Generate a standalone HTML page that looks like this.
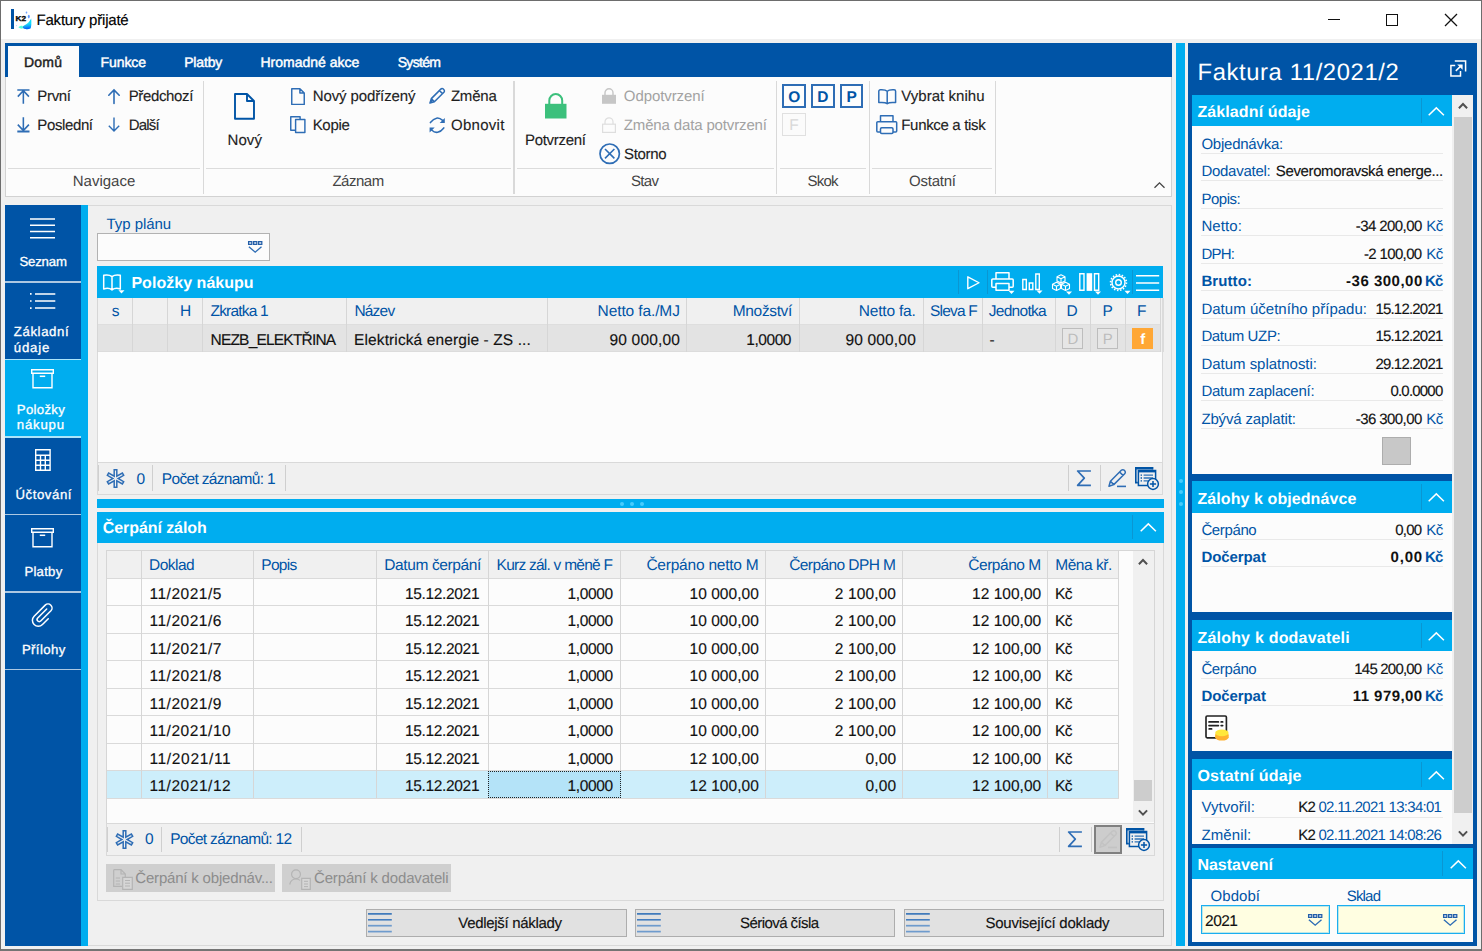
<!DOCTYPE html>
<html lang="cs"><head><meta charset="utf-8"><title>Faktury přijaté</title>
<style>
html,body{margin:0;padding:0}
body{width:1482px;height:951px;position:relative;overflow:hidden;background:#f0f0f0;font-family:"Liberation Sans",sans-serif;font-size:15px;color:#1e1e1e;text-rendering:geometricPrecision}
.a{position:absolute;box-sizing:border-box}
.t{position:absolute;white-space:nowrap;line-height:1}
svg{overflow:visible}
</style></head><body>
<div class="a" style="left:0.00px;top:0.00px;width:1482.00px;height:951.00px;background:#f0f0f0;border:1px solid #6d6d6d;border-bottom:2px solid #747474;"></div>
<div class="a" style="left:1.00px;top:1.00px;width:1480.00px;height:38.00px;background:#ffffff;"></div>
<div class="a" style="left:11.00px;top:9.00px;width:2.50px;height:20.00px;background:#0054a6;"></div>
<svg class="a" style="left:14.00px;top:9.00px;" width="18.00" height="20.00" viewBox="0 0 18 20"><defs><linearGradient id="lg" x1="0.1" y1="0.9" x2="0.95" y2="0.1"><stop offset="0" stop-color="#48ffd6"/><stop offset=".45" stop-color="#22e6f4"/><stop offset="1" stop-color="#00d8ff"/></linearGradient><linearGradient id="lg2" x1="0" y1="0" x2="0" y2="1"><stop offset=".45" stop-color="#0060ff" stop-opacity="0"/><stop offset="1" stop-color="#0058ff"/></linearGradient></defs>
<path d="M17.2 9.6C17.5 14 17.4 17.4 16.6 19.2C14 20.6 10.6 20.4 8.5 18.7C8 17.4 9 17 10.2 16.4C13.2 15 15.6 13 17.2 9.6Z" fill="url(#lg)"/>
<path d="M17.2 9.6C17.5 14 17.4 17.4 16.6 19.2C14 20.6 10.6 20.4 8.5 18.7C8 17.4 9 17 10.2 16.4C13.2 15 15.6 13 17.2 9.6Z" fill="url(#lg2)"/>
<path d="M4.4 18.3C6 17 7.5 16.7 8.6 16.9L8.7 19.6C7 19.8 5.5 19.2 4.4 18.3Z" fill="#50ffda"/>
<ellipse cx="12.5" cy="3.6" rx="0.8" ry="1.1" fill="#5a95ff" opacity=".85"/><ellipse cx="14.8" cy="7.6" rx="1" ry="1.8" fill="#4d8dff" opacity=".9"/><circle cx="2.5" cy="16.6" r="0.6" fill="#8fb8ff" opacity=".6"/>
<text x="1.5" y="12.4" font-family="Liberation Sans, sans-serif" font-weight="bold" font-size="7.2" textLength="10.6" lengthAdjust="spacingAndGlyphs" fill="#0a0a0a" stroke="#0a0a0a" stroke-width="0.35">K2</text></svg>
<span class="t" style="left:36.50px;top:13.00px;font-size:15.00px;color:#000;-webkit-text-stroke:0.14px currentColor;letter-spacing:-0.202px;">Faktury přijaté</span>
<div class="a" style="left:1328.00px;top:19.00px;width:12.00px;height:1.20px;background:#111;"></div>
<div class="a" style="left:1386.00px;top:14.00px;width:12.00px;height:12.00px;border:1.3px solid #111;"></div>
<svg class="a" style="left:1445.00px;top:14.00px;" width="12.00" height="12.00" viewBox="0 0 12 12"><path d="M0 0L12 12M12 0L0 12" stroke="#111" stroke-width="1.3" fill="none"/></svg>
<div class="a" style="left:5.00px;top:43.00px;width:1167.00px;height:34.40px;background:#0054a6;"></div>
<div class="a" style="left:8.00px;top:46.30px;width:70.50px;height:31.70px;background:#fcfcfc;"></div>
<span class="t" style="left:24.00px;top:55.00px;font-size:14.00px;color:#1e1e1e;letter-spacing:0.207px;-webkit-text-stroke:0.45px currentColor;">Domů</span>
<span class="t" style="left:100.60px;top:55.00px;font-size:14.00px;color:#fff;letter-spacing:-0.104px;-webkit-text-stroke:0.45px currentColor;">Funkce</span>
<span class="t" style="left:184.20px;top:55.00px;font-size:14.00px;color:#fff;letter-spacing:-0.164px;-webkit-text-stroke:0.45px currentColor;">Platby</span>
<span class="t" style="left:260.40px;top:55.00px;font-size:14.00px;color:#fff;letter-spacing:0.013px;-webkit-text-stroke:0.45px currentColor;">Hromadné akce</span>
<span class="t" style="left:397.70px;top:55.00px;font-size:14.00px;color:#fff;letter-spacing:-0.678px;-webkit-text-stroke:0.45px currentColor;">Systém</span>
<div class="a" style="left:5.00px;top:77.40px;width:1167.00px;height:119.80px;background:#fcfcfc;border:1px solid #d2d2d2;border-top:none;"></div>
<div class="a" style="left:202.90px;top:81.00px;width:1.20px;height:113.00px;background:#d9d9d9;"></div>
<div class="a" style="left:513.40px;top:81.00px;width:1.20px;height:113.00px;background:#d9d9d9;"></div>
<div class="a" style="left:776.10px;top:81.00px;width:1.20px;height:113.00px;background:#d9d9d9;"></div>
<div class="a" style="left:868.60px;top:81.00px;width:1.20px;height:113.00px;background:#d9d9d9;"></div>
<div class="a" style="left:994.90px;top:81.00px;width:1.20px;height:113.00px;background:#d9d9d9;"></div>
<div class="a" style="left:8.40px;top:167.80px;width:191.60px;height:1.20px;background:#dcdcdc;"></div>
<div class="a" style="left:206.00px;top:167.80px;width:305.00px;height:1.20px;background:#dcdcdc;"></div>
<div class="a" style="left:517.00px;top:167.80px;width:256.50px;height:1.20px;background:#dcdcdc;"></div>
<div class="a" style="left:780.00px;top:167.80px;width:86.00px;height:1.20px;background:#dcdcdc;"></div>
<div class="a" style="left:872.00px;top:167.80px;width:120.00px;height:1.20px;background:#dcdcdc;"></div>
<span class="t" style="left:72.72px;top:174.00px;font-size:15.00px;color:#444;">Navigace</span>
<span class="t" style="left:332.40px;top:174.00px;font-size:15.00px;color:#444;letter-spacing:-0.470px;">Záznam</span>
<span class="t" style="left:631.00px;top:174.00px;font-size:15.00px;color:#444;letter-spacing:-0.667px;">Stav</span>
<span class="t" style="left:807.60px;top:174.00px;font-size:15.00px;color:#444;letter-spacing:-0.800px;">Skok</span>
<span class="t" style="left:909.00px;top:174.00px;font-size:15.00px;color:#444;letter-spacing:-0.229px;">Ostatní</span>
<svg class="a" style="left:1154.30px;top:181.70px;" width="11.00" height="6.00" viewBox="0 0 11 6"><path d="M0.5 5.7L5.5 0.8L10.5 5.7" stroke="#444" stroke-width="1.3" fill="none"/></svg>
<span class="t" style="left:37.30px;top:89.00px;font-size:15.00px;color:#1e1e1e;-webkit-text-stroke:0.14px currentColor;letter-spacing:-0.331px;">První</span>
<span class="t" style="left:37.30px;top:118.00px;font-size:15.00px;color:#1e1e1e;-webkit-text-stroke:0.14px currentColor;letter-spacing:-0.379px;">Poslední</span>
<span class="t" style="left:128.70px;top:89.00px;font-size:15.00px;color:#1e1e1e;-webkit-text-stroke:0.14px currentColor;letter-spacing:-0.359px;">Předchozí</span>
<span class="t" style="left:128.70px;top:118.00px;font-size:15.00px;color:#1e1e1e;-webkit-text-stroke:0.14px currentColor;letter-spacing:-0.800px;">Další</span>
<svg class="a" style="left:16.50px;top:88.50px;" width="13.00" height="15.00" viewBox="0 0 13 15"><path d="M0.3 0.9H12.5M6.35 1V14.8M0.8 7.6L6.35 1.6L11.9 7.6" stroke="#2e6db5" stroke-width="1.55" fill="none"/></svg>
<svg class="a" style="left:16.50px;top:117.00px;" width="13.00" height="16.00" viewBox="0 0 13 16"><path d="M6.35 0.2V13.8M0.8 7.6L6.35 13.6L11.9 7.6" stroke="#2e6db5" stroke-width="1.55" fill="none"/><path d="M0.3 14.5H12.5" stroke="#2e6db5" stroke-width="2"/></svg>
<svg class="a" style="left:108.00px;top:89.00px;" width="12.00" height="15.00" viewBox="0 0 12 15"><path d="M6 1V14.5M0.8 6.2L6 1L11.2 6.2" stroke="#2e6db5" stroke-width="1.6" fill="none" stroke-linecap="round"/></svg>
<svg class="a" style="left:108.00px;top:117.00px;" width="12.00" height="15.00" viewBox="0 0 12 15"><path d="M6 0.5V14M0.8 8.8L6 14L11.2 8.8" stroke="#2e6db5" stroke-width="1.4" fill="none"/></svg>
<svg class="a" style="left:233.70px;top:92.60px;" width="21.20" height="26.80" viewBox="0 0 21.2 26.8"><path d="M1 1H13L20 8V25.8H1Z M13 1V8H20" stroke="#0054a6" stroke-width="1.9" fill="none" stroke-linejoin="round"/></svg>
<span class="t" style="left:227.50px;top:133.00px;font-size:15.00px;color:#1e1e1e;-webkit-text-stroke:0.14px currentColor;letter-spacing:0.100px;">Nový</span>
<svg class="a" style="left:291.00px;top:87.50px;" width="14.00" height="17.20" viewBox="0 0 14 17.2"><path d="M0.75 0.75H8.9L13.25 5.1V16.4H0.75Z M8.9 0.75V5.1H13.25" stroke="#2e6db5" stroke-width="1.45" fill="none" stroke-linejoin="round"/></svg>
<span class="t" style="left:312.70px;top:89.00px;font-size:15.00px;color:#1e1e1e;-webkit-text-stroke:0.14px currentColor;letter-spacing:-0.104px;">Nový podřízený</span>
<svg class="a" style="left:290.30px;top:116.00px;" width="16.50" height="17.60" viewBox="0 0 16.5 17.6"><path d="M10.1 3V0.75H0.75V14.3H4.9M5.6 3.6H14.9V16.5H5.6Z" stroke="#2e6db5" stroke-width="1.45" fill="none" stroke-linejoin="round"/></svg>
<span class="t" style="left:312.70px;top:118.00px;font-size:15.00px;color:#1e1e1e;-webkit-text-stroke:0.14px currentColor;letter-spacing:-0.325px;">Kopie</span>
<svg class="a" style="left:428.60px;top:88.00px;" width="16.00" height="16.00" viewBox="0 0 16 16"><path d="M0.9 15.1L2.3 10.6L11.8 1.1a1.75 1.75 0 0 1 2.5 0l0.6 0.6a1.75 1.75 0 0 1 0 2.5L5.4 13.7Z M2.3 10.6L5.4 13.7 M10.4 2.5L13.5 5.6" stroke="#2e6db5" stroke-width="1.5" fill="none" stroke-linejoin="round"/><path d="M0.9 15.1L1.9 11.9L4.1 14.1Z" fill="#2e6db5"/></svg>
<span class="t" style="left:450.90px;top:89.00px;font-size:15.00px;color:#1e1e1e;-webkit-text-stroke:0.14px currentColor;letter-spacing:-0.206px;">Změna</span>
<svg class="a" style="left:428.80px;top:116.50px;" width="16.40" height="16.40" viewBox="0 0 16.4 16.4"><path d="M1.4 5.6Q7.6 -2.2 13.6 3.4M14.8 10.9Q8.6 18.7 2.6 13" stroke="#2e6db5" stroke-width="1.55" fill="none" stroke-linecap="round"/><path d="M15.8 0.9V6H10.7ZM0.6 15.5V10.4H5.7Z" fill="#2e6db5"/></svg>
<span class="t" style="left:451.00px;top:118.00px;font-size:15.00px;color:#1e1e1e;-webkit-text-stroke:0.14px currentColor;letter-spacing:0.271px;">Obnovit</span>
<svg class="a" style="left:544.50px;top:93.00px;" width="21.50" height="25.50" viewBox="0 0 21.5 25.5"><path d="M4.3 11V7.5a6.45 6.45 0 0 1 12.9 0V11" stroke="#3cc07c" stroke-width="2" fill="none"/><rect x="0" y="10.8" width="21.5" height="14.7" fill="#3cc07c"/></svg>
<span class="t" style="left:525.00px;top:133.00px;font-size:15.00px;color:#1e1e1e;-webkit-text-stroke:0.14px currentColor;letter-spacing:-0.297px;">Potvrzení</span>
<svg class="a" style="left:602.00px;top:88.00px;" width="14.00" height="16.00" viewBox="0 0 14 16"><path d="M3 7V4.8a4 4 0 0 1 8 0V7" stroke="#c6c6c6" stroke-width="1.4" fill="none"/><rect x="0" y="6.8" width="14" height="9" fill="#c6c6c6"/></svg>
<span class="t" style="left:623.80px;top:89.00px;font-size:15.00px;color:#a2a2a2;letter-spacing:-0.077px;">Odpotvrzení</span>
<svg class="a" style="left:602.00px;top:116.50px;" width="14.00" height="16.00" viewBox="0 0 14 16"><path d="M3 7V4.8a4 4 0 0 1 8 0V7" stroke="#dedede" stroke-width="1.2" fill="none"/><rect x="0.6" y="7.2" width="12.8" height="8.2" fill="none" stroke="#dedede" stroke-width="1.2"/></svg>
<span class="t" style="left:623.80px;top:118.00px;font-size:15.00px;color:#a2a2a2;letter-spacing:-0.145px;">Změna data potvrzení</span>
<svg class="a" style="left:598.50px;top:142.50px;" width="21.40" height="21.40" viewBox="0 0 21.4 21.4"><circle cx="10.7" cy="10.7" r="9.7" stroke="#2e6db5" stroke-width="1.7" fill="none"/><path d="M6 6L15.4 15.4M15.4 6L6 15.4" stroke="#2e6db5" stroke-width="1.6"/></svg>
<span class="t" style="left:624.00px;top:147.00px;font-size:15.00px;color:#1e1e1e;-webkit-text-stroke:0.14px currentColor;letter-spacing:-0.315px;">Storno</span>
<div class="a" style="left:782.30px;top:84.20px;width:23.70px;height:23.40px;background:#fdfdfd;border:2px solid #2e6db5;"></div>
<span class="t" style="left:788.15px;top:90.00px;font-size:15.50px;color:#0054a6;font-weight:bold;">O</span>
<div class="a" style="left:811.00px;top:84.20px;width:23.70px;height:23.40px;background:#fdfdfd;border:2px solid #2e6db5;"></div>
<span class="t" style="left:817.32px;top:90.00px;font-size:15.50px;color:#0054a6;font-weight:bold;">D</span>
<div class="a" style="left:839.80px;top:84.20px;width:23.70px;height:23.40px;background:#fdfdfd;border:2px solid #2e6db5;"></div>
<span class="t" style="left:846.55px;top:90.00px;font-size:15.50px;color:#0054a6;font-weight:bold;">P</span>
<div class="a" style="left:782.30px;top:112.90px;width:23.70px;height:23.30px;background:#fbfbfb;border:1px solid #e0e0e0;"></div>
<span class="t" style="left:789.37px;top:118.00px;font-size:15.50px;color:#d8d8d8;">F</span>
<svg class="a" style="left:877.50px;top:88.60px;" width="18.50" height="15.50" viewBox="0 0 18.5 15.5"><path d="M9.2 2.3C8 1.1 6 0.8 3.8 0.8H2.3A1.5 1.5 0 0 0 0.8 2.3V13.4H3.8C6 13.4 8 13.6 9.2 14.7C10.4 13.6 12.4 13.4 14.6 13.4H17.6V2.3A1.5 1.5 0 0 0 16.1 0.8H14.6C12.4 0.8 10.4 1.1 9.2 2.3ZM9.2 2.3V14.9" stroke="#2e6db5" stroke-width="1.5" fill="none" stroke-linejoin="round"/></svg>
<span class="t" style="left:901.30px;top:89.00px;font-size:15.00px;color:#1e1e1e;-webkit-text-stroke:0.14px currentColor;letter-spacing:0.036px;">Vybrat knihu</span>
<svg class="a" style="left:876.00px;top:115.00px;" width="21.50" height="19.20" viewBox="0 0 21.5 19.2"><path d="M4.5 6.8V0.8H17V6.8M4.5 17H1.8a1 1 0 0 1-1-1V7.8a1 1 0 0 1 1-1H19.7a1 1 0 0 1 1 1V16a1 1 0 0 1-1 1H17" stroke="#2e6db5" stroke-width="1.5" fill="none" stroke-linejoin="round"/><rect x="4.5" y="12.8" width="12.5" height="5.6" rx="1.2" stroke="#2e6db5" stroke-width="1.5" fill="none"/></svg>
<span class="t" style="left:901.30px;top:118.00px;font-size:15.00px;color:#1e1e1e;-webkit-text-stroke:0.14px currentColor;letter-spacing:-0.335px;">Funkce a tisk</span>
<div class="a" style="left:5.00px;top:205.20px;width:76.00px;height:740.60px;background:#0054a6;"></div>
<div class="a" style="left:81.00px;top:205.20px;width:7.40px;height:740.60px;background:#00adef;"></div>
<div class="a" style="left:5.00px;top:358.70px;width:76.00px;height:79.10px;background:#00adef;"></div>
<div class="a" style="left:5.00px;top:281.30px;width:76.00px;height:1.60px;background:rgba(255,255,255,.68);"></div>
<div class="a" style="left:5.00px;top:358.70px;width:76.00px;height:1.60px;background:rgba(255,255,255,.68);"></div>
<div class="a" style="left:5.00px;top:436.20px;width:76.00px;height:1.60px;background:rgba(255,255,255,.68);"></div>
<div class="a" style="left:5.00px;top:513.50px;width:76.00px;height:1.60px;background:rgba(255,255,255,.68);"></div>
<div class="a" style="left:5.00px;top:591.10px;width:76.00px;height:1.60px;background:rgba(255,255,255,.68);"></div>
<div class="a" style="left:5.00px;top:668.60px;width:76.00px;height:1.60px;background:rgba(255,255,255,.68);"></div>
<svg class="a" style="left:29.80px;top:217.50px;" width="25.00" height="21.00" viewBox="0 0 25 21"><path d="M0 0.9H25M0 7.15H25M0 13.4H25M0 19.65H25" stroke="#fff" stroke-width="1.5"/></svg>
<span class="t" style="left:19.40px;top:255.00px;font-size:13.20px;color:#fff;letter-spacing:-0.169px;-webkit-text-stroke:0.3px #fff;">Seznam</span>
<svg class="a" style="left:29.50px;top:293.40px;" width="25.50" height="16.00" viewBox="0 0 25.5 16"><path d="M5 0.9H25.3M5 8H25.3M5 15.1H25.3" stroke="#fff" stroke-width="1.5"/><path d="M0 0.9H1.6M0 8H1.6M0 15.1H1.6" stroke="#fff" stroke-width="1.6"/></svg>
<span class="t" style="left:13.80px;top:325.00px;font-size:13.20px;color:#fff;letter-spacing:0.611px;-webkit-text-stroke:0.3px #fff;">Základní</span>
<span class="t" style="left:13.80px;top:341.00px;font-size:13.20px;color:#fff;letter-spacing:0.800px;-webkit-text-stroke:0.3px #fff;">údaje</span>
<svg class="a" style="left:31.00px;top:369.30px;" width="23.00" height="19.50" viewBox="0 0 23 19.5"><path d="M0.7 0.7H22.3V4.3H0.7ZM2 4.3V18.8H21V4.3" stroke="#fff" stroke-width="1.4" fill="none"/><path d="M8.8 7.3H14.2" stroke="#fff" stroke-width="1.5"/></svg>
<span class="t" style="left:16.80px;top:403.00px;font-size:13.20px;color:#fff;letter-spacing:0.300px;-webkit-text-stroke:0.3px #fff;">Položky</span>
<span class="t" style="left:16.80px;top:418.00px;font-size:13.20px;color:#fff;letter-spacing:0.800px;-webkit-text-stroke:0.3px #fff;">nákupu</span>
<svg class="a" style="left:34.50px;top:449.30px;" width="15.80" height="22.00" viewBox="0 0 15.8 22"><path d="M0.7 0.7H15.1V21.3H0.7ZM0.7 6.2H15.1M0.7 11.2H15.1M0.7 16.2H15.1M5.5 6.2V21.3M10.3 6.2V21.3" stroke="#fff" stroke-width="1.4" fill="none"/></svg>
<span class="t" style="left:15.50px;top:488.00px;font-size:13.20px;color:#fff;letter-spacing:0.561px;-webkit-text-stroke:0.3px #fff;">Účtování</span>
<svg class="a" style="left:31.00px;top:528.30px;" width="23.00" height="19.50" viewBox="0 0 23 19.5"><path d="M0.7 0.7H22.3V4.3H0.7ZM2 4.3V18.8H21V4.3" stroke="#fff" stroke-width="1.4" fill="none"/><path d="M8.8 7.3H14.2" stroke="#fff" stroke-width="1.5"/></svg>
<span class="t" style="left:24.40px;top:565.00px;font-size:13.20px;color:#fff;letter-spacing:0.241px;-webkit-text-stroke:0.3px #fff;">Platby</span>
<svg class="a" style="left:32.00px;top:604.00px;" width="21.00" height="23.00" viewBox="0 0 21 23"><path d="M16.26 14.71 L10.47 20.51 A5.90 5.90 0 0 1 2.12 12.16 L13.19 1.10 A4.05 4.05 0 0 1 18.92 6.82 L8.70 17.04 A2.10 2.10 0 0 1 5.73 14.07 L14.71 5.09" stroke="#fff" stroke-width="1.5" fill="none" stroke-linecap="round"/></svg>
<span class="t" style="left:21.90px;top:643.00px;font-size:13.20px;color:#fff;letter-spacing:0.391px;-webkit-text-stroke:0.3px #fff;">Přílohy</span>
<div class="a" style="left:88.40px;top:205.00px;width:1083.60px;height:741.30px;background:#f0f0f0;border:1px solid #d9d9d9;border-left:none;"></div>
<span class="t" style="left:106.60px;top:217.00px;font-size:15.00px;color:#0054a6;letter-spacing:-0.078px;">Typ plánu</span>
<div class="a" style="left:97.30px;top:233.00px;width:172.50px;height:28.20px;background:#fcfcfc;border:1px solid #b2b2b2;"></div>
<svg class="a" style="left:247.80px;top:241.00px;" width="15.00" height="12.50" viewBox="0 0 15 12.5"><path d="M0.6 0.6H3.8V3.4H0.6ZM5.6 0.6H8.8V3.4H5.6ZM10.6 0.6H13.8V3.4H10.6Z" stroke="#245fa9" stroke-width="1.25" fill="#dfe9f5"/><path d="M0.9 5.8L7.2 11.2L13.5 5.8" stroke="#2e6db5" stroke-width="1.4" fill="none"/></svg>
<div class="a" style="left:97.20px;top:266.40px;width:1066.30px;height:31.30px;background:#00adef;"></div>
<svg class="a" style="left:103.20px;top:274.40px;" width="22.00" height="20.00" viewBox="0 0 22 20"><path d="M9 2.6C7 1 3.5 0.8 0.7 1.3V15C3.5 14.1 7 14.3 9 15.9C11 14.3 14.5 14.1 17.3 15V1.3C14.5 0.8 11 1 9 2.6ZM9 2.6V15.9" stroke="#fff" stroke-width="1.5" fill="none" stroke-linejoin="round"/><path d="M15.5 16.3H21.5L18.5 19.5Z" fill="#fff"/></svg>
<span class="t" style="left:131.40px;top:276.00px;font-size:16.00px;color:#fff;font-weight:bold;letter-spacing:0.035px;">Položky nákupu</span>
<div class="a" style="left:957.70px;top:270.00px;width:1.00px;height:24.00px;background:#0a96d2;"></div>
<div class="a" style="left:986.80px;top:270.00px;width:1.00px;height:24.00px;background:#0a96d2;"></div>
<div class="a" style="left:1132.00px;top:270.00px;width:1.00px;height:24.00px;background:#0a96d2;"></div>
<svg class="a" style="left:967.00px;top:275.50px;" width="13.00" height="13.50" viewBox="0 0 13 13.5"><path d="M0.8 0.8V12.7L12 6.75Z" stroke="#fff" stroke-width="1.4" fill="none" stroke-linejoin="round"/></svg>
<svg class="a" style="left:991.00px;top:272.00px;" width="24.00" height="22.00" viewBox="0 0 24 22"><path d="M5 7V0.8H18V7M5 15.2H1.8a1 1 0 0 1-1-1V8a1 1 0 0 1 1-1H21.2a1 1 0 0 1 1 1v6.2a1 1 0 0 1-1 1H18M5 11.4H18V18.2H5Z" stroke="#fff" stroke-width="1.5" fill="none" stroke-linejoin="round"/><path d="M17.5 18.7H23.5L20.5 21.9Z" fill="#fff"/></svg>
<svg class="a" style="left:1022.00px;top:273.00px;" width="21.00" height="21.00" viewBox="0 0 21 21"><path d="M0.8 6.5H4.3V16.5H0.8ZM7.3 10H10.8V16.5H7.3ZM13.8 1H17.3V16.5H13.8Z" stroke="#fff" stroke-width="1.4" fill="none"/><path d="M14.5 17.5H20.5L17.5 20.7Z" fill="#fff"/></svg>
<svg class="a" style="left:1051.00px;top:273.50px;" width="21.00" height="21.00" viewBox="0 0 21 21"><path d="M10 0.8L14 2.8V7L10 9L6 7V2.8ZM6 2.8L10 4.8L14 2.8M10 4.8V9M5.5 8.3L9.5 10.3V14.5L5.5 16.5L1.5 14.5V10.3ZM1.5 10.3L5.5 12.3L9.5 10.3M5.5 12.3V16.5M14.5 8.3L18.5 10.3V14.5L14.5 16.5L10.5 14.5V10.3ZM10.5 10.3L14.5 12.3L18.5 10.3M14.5 12.3V16.5" stroke="#fff" stroke-width="1.1" fill="none" stroke-linejoin="round"/><path d="M15 17.5H21L18 20.7Z" fill="#fff"/></svg>
<svg class="a" style="left:1078.50px;top:272.50px;" width="23.00" height="22.00" viewBox="0 0 23 22"><path d="M0.8 0.8H5V17.2H0.8ZM15.5 0.8H19.7V17.2H15.5Z" stroke="#fff" stroke-width="1.4" fill="none"/><rect x="7.6" y="0.2" width="5.6" height="17.7" fill="#fff"/><path d="M16 18.6H22L19 21.8Z" fill="#fff"/></svg>
<svg class="a" style="left:1108.50px;top:272.60px;" width="22.00" height="22.00" viewBox="0 0 22 22"><circle cx="9.5" cy="9.5" r="6.5" stroke="#fff" stroke-width="1.4" fill="none"/><circle cx="9.5" cy="9.5" r="7.9" stroke="#fff" stroke-width="1.7" fill="none" stroke-dasharray="1.5 1.6"/><circle cx="9.5" cy="9.5" r="2.8" stroke="#fff" stroke-width="1.4" fill="none"/><path d="M15.5 17.8H21.5L18.5 21Z" fill="#fff"/></svg>
<svg class="a" style="left:1136.40px;top:274.50px;" width="23.20" height="16.00" viewBox="0 0 23.2 16"><path d="M0 0.8H23.2M0 8H23.2M0 15.2H23.2" stroke="#fff" stroke-width="1.5"/></svg>
<div class="a" style="left:97.30px;top:297.70px;width:1063.60px;height:26.50px;background:#f0f0f0;"></div>
<div class="a" style="left:97.30px;top:324.20px;width:1063.60px;height:27.40px;background:#e3e3e3;"></div>
<div class="a" style="left:97.30px;top:351.60px;width:1066.20px;height:110.40px;background:#fcfcfc;border-left:1px solid #dadada;border-right:1px solid #dbdbdb;"></div>
<div class="a" style="left:1162.20px;top:297.70px;width:1.40px;height:54.30px;background:#dbdbdb;"></div>
<div class="a" style="left:97.30px;top:323.60px;width:1063.60px;height:1.00px;background:#dedede;"></div>
<div class="a" style="left:97.30px;top:351.10px;width:1063.60px;height:1.00px;background:#dcdcdc;"></div>
<div class="a" style="left:97.30px;top:297.70px;width:1.00px;height:53.90px;background:#d6d6d6;"></div>
<div class="a" style="left:132.10px;top:297.70px;width:1.00px;height:53.90px;background:#d6d6d6;"></div>
<div class="a" style="left:167.20px;top:297.70px;width:1.00px;height:53.90px;background:#d6d6d6;"></div>
<div class="a" style="left:202.20px;top:297.70px;width:1.00px;height:53.90px;background:#d6d6d6;"></div>
<div class="a" style="left:346.20px;top:297.70px;width:1.00px;height:53.90px;background:#d6d6d6;"></div>
<div class="a" style="left:547.20px;top:297.70px;width:1.00px;height:53.90px;background:#d6d6d6;"></div>
<div class="a" style="left:686.20px;top:297.70px;width:1.00px;height:53.90px;background:#d6d6d6;"></div>
<div class="a" style="left:798.90px;top:297.70px;width:1.00px;height:53.90px;background:#d6d6d6;"></div>
<div class="a" style="left:922.70px;top:297.70px;width:1.00px;height:53.90px;background:#d6d6d6;"></div>
<div class="a" style="left:981.50px;top:297.70px;width:1.00px;height:53.90px;background:#d6d6d6;"></div>
<div class="a" style="left:1054.80px;top:297.70px;width:1.00px;height:53.90px;background:#d6d6d6;"></div>
<div class="a" style="left:1089.90px;top:297.70px;width:1.00px;height:53.90px;background:#d6d6d6;"></div>
<div class="a" style="left:1124.90px;top:297.70px;width:1.00px;height:53.90px;background:#d6d6d6;"></div>
<div class="a" style="left:1160.10px;top:297.70px;width:1.00px;height:53.90px;background:#d6d6d6;"></div>
<span class="t" style="left:111.83px;top:304.00px;font-size:15.50px;color:#0054a6;">s</span>
<span class="t" style="left:180.12px;top:304.00px;font-size:15.50px;color:#0054a6;">H</span>
<span class="t" style="left:210.50px;top:304.00px;font-size:15.50px;color:#0054a6;letter-spacing:-0.800px;">Zkratka 1</span>
<span class="t" style="left:354.40px;top:304.00px;font-size:15.50px;color:#0054a6;letter-spacing:-0.800px;">Název</span>
<span class="t" style="left:597.60px;top:304.00px;font-size:15.50px;color:#0054a6;letter-spacing:-0.113px;">Netto fa./MJ</span>
<span class="t" style="left:732.80px;top:304.00px;font-size:15.50px;color:#0054a6;letter-spacing:-0.357px;">Množství</span>
<span class="t" style="left:858.80px;top:304.00px;font-size:15.50px;color:#0054a6;letter-spacing:-0.199px;">Netto fa.</span>
<span class="t" style="left:930.00px;top:304.00px;font-size:15.50px;color:#0054a6;letter-spacing:-0.800px;">Sleva F</span>
<span class="t" style="left:988.80px;top:304.00px;font-size:15.50px;color:#0054a6;letter-spacing:-0.730px;">Jednotka</span>
<span class="t" style="left:1066.42px;top:304.00px;font-size:15.50px;color:#0054a6;">D</span>
<span class="t" style="left:1102.45px;top:304.00px;font-size:15.50px;color:#0054a6;">P</span>
<span class="t" style="left:1136.97px;top:304.00px;font-size:15.50px;color:#0054a6;">F</span>
<span class="t" style="left:210.50px;top:333.00px;font-size:15.50px;color:#111;-webkit-text-stroke:0.14px currentColor;letter-spacing:-0.800px;">NEZB_ELEKTŘINA</span>
<span class="t" style="left:354.10px;top:333.00px;font-size:15.50px;color:#111;-webkit-text-stroke:0.14px currentColor;letter-spacing:0.104px;">Elektrická energie - ZS ...</span>
<span class="t" style="left:609.50px;top:333.00px;font-size:15.50px;color:#111;-webkit-text-stroke:0.14px currentColor;letter-spacing:0.178px;">90 000,00</span>
<span class="t" style="left:746.20px;top:333.00px;font-size:15.50px;color:#111;-webkit-text-stroke:0.14px currentColor;letter-spacing:-0.426px;">1,0000</span>
<span class="t" style="left:845.40px;top:333.00px;font-size:15.50px;color:#111;-webkit-text-stroke:0.14px currentColor;letter-spacing:0.178px;">90 000,00</span>
<span class="t" style="left:989.50px;top:333.00px;font-size:15.50px;color:#111;-webkit-text-stroke:0.14px currentColor;">-</span>
<div class="a" style="left:1062.30px;top:327.70px;width:21.00px;height:20.90px;background:#e6e6e6;border:1px solid #bdbdbd;"></div>
<span class="t" style="left:1067.40px;top:332.00px;font-size:15.00px;color:#bcbcbc;">D</span>
<div class="a" style="left:1097.30px;top:327.70px;width:21.00px;height:20.90px;background:#e6e6e6;border:1px solid #bdbdbd;"></div>
<span class="t" style="left:1102.81px;top:332.00px;font-size:15.00px;color:#bcbcbc;">P</span>
<div class="a" style="left:1132.30px;top:327.70px;width:21.00px;height:21.10px;background:#ffa735;"></div>
<span class="t" style="left:1140.29px;top:332.00px;font-size:15.00px;color:#fff;font-weight:bold;">f</span>
<div class="a" style="left:97.30px;top:461.80px;width:1066.20px;height:32.80px;background:#f0f0f0;border:1px solid #d9d9d9;"></div>
<div class="a" style="left:98.30px;top:465.30px;width:1.00px;height:25.30px;background:#cfcfcf;"></div>
<div class="a" style="left:152.30px;top:465.30px;width:1.00px;height:25.30px;background:#cfcfcf;"></div>
<div class="a" style="left:284.90px;top:465.30px;width:1.00px;height:25.30px;background:#cfcfcf;"></div>
<div class="a" style="left:1067.50px;top:465.30px;width:1.00px;height:25.30px;background:#cfcfcf;"></div>
<div class="a" style="left:1099.90px;top:465.30px;width:1.00px;height:25.30px;background:#cfcfcf;"></div>
<svg class="a" style="left:106.10px;top:468.90px;" width="19.00" height="19.00" viewBox="0 0 19 19"><path d="M1.32 6.28L2.62 4.02L8.20 7.25L8.20 0.80L10.80 0.80L10.80 7.25L16.38 4.02L17.68 6.28L12.10 9.50L17.68 12.72L16.38 14.98L10.80 11.75L10.80 18.20L8.20 18.20L8.20 11.75L2.62 14.98L1.32 12.72L6.90 9.50Z" stroke="#2e6db5" stroke-width="1.5" fill="none" stroke-linejoin="miter"/></svg>
<span class="t" style="left:136.60px;top:472.00px;font-size:15.50px;color:#0054a6;">0</span>
<span class="t" style="left:161.80px;top:472.00px;font-size:15.50px;color:#0054a6;letter-spacing:-0.685px;">Počet záznamů: 1</span>
<svg class="a" style="left:1076.40px;top:470.00px;" width="16.00" height="16.40" viewBox="0 0 16 16.4"><path d="M14.9 1H1.6L8.3 8.2L1.6 15.4H14.9" stroke="#2e6db5" stroke-width="1.7" fill="none" stroke-linejoin="round"/></svg>
<svg class="a" style="left:1107.70px;top:469.30px;" width="18.50" height="18.50" viewBox="0 0 18.5 18.5"><path d="M1 17.3L2.4 12.2L13.3 1.3a2.1 2.1 0 0 1 3 0l0.4 0.4a2.1 2.1 0 0 1 0 3L5.8 15.6Z M2.4 12.2L5.8 15.6 M11.6 3L15 6.4" stroke="#2e6db5" stroke-width="1.5" fill="none" stroke-linejoin="round"/><path d="M9 17.4H18" stroke="#2e6db5" stroke-width="1.6"/></svg>
<svg class="a" style="left:1135.00px;top:467.30px;" width="24.00" height="23.00" viewBox="0 0 24 23"><g stroke="#0054a6" fill="none"><path d="M2.8 15.6H0.8V0.9H17.6V2.6" stroke-width="1.6"/><path d="M0.8 1.6H17.6" stroke-width="1.8"/><path d="M3.4 3.6H20.6V18.4H3.4Z" stroke-width="1.5"/><path d="M3.4 4.4H20.6" stroke-width="2"/><path d="M8.6 8.2H18M8.6 11H18M8.6 13.8H14" stroke-width="1.3" opacity=".8"/><path d="M5.6 8.2H7M5.6 11H7M5.6 13.8H7" stroke-width="1.3"/><circle cx="18" cy="17" r="5.4" fill="#f0f0f0" stroke-width="1.5"/><path d="M14.9 17H21.1M18 13.9V20.1" stroke-width="1.5"/></g></svg>
<div class="a" style="left:97.20px;top:498.90px;width:1066.40px;height:8.70px;background:#00adef;"></div>
<div class="a" style="left:619.90px;top:501.80px;width:4.00px;height:4.00px;background:#48ccfd;border-radius:50%;"></div>
<div class="a" style="left:629.85px;top:501.80px;width:4.00px;height:4.00px;background:#48ccfd;border-radius:50%;"></div>
<div class="a" style="left:639.80px;top:501.80px;width:4.00px;height:4.00px;background:#48ccfd;border-radius:50%;"></div>
<div class="a" style="left:97.20px;top:511.60px;width:1066.40px;height:31.00px;background:#00adef;"></div>
<span class="t" style="left:102.70px;top:521.00px;font-size:16.00px;color:#fff;font-weight:bold;letter-spacing:-0.065px;">Čerpání záloh</span>
<div class="a" style="left:1131.90px;top:515.00px;width:1.00px;height:24.00px;background:#0a96d2;"></div>
<svg class="a" style="left:1139.60px;top:522.60px;" width="16.60" height="9.00" viewBox="0 0 16.6 9"><path d="M0.7 8.3L8.3 0.9L15.9 8.3" stroke="#fff" stroke-width="1.5" fill="none"/></svg>
<div class="a" style="left:97.20px;top:542.60px;width:1066.40px;height:358.00px;background:#f0f0f0;border:1px solid #d9d9d9;border-top:none;"></div>
<div class="a" style="left:106.40px;top:550.30px;width:1048.30px;height:273.30px;background:#fcfcfc;border:1px solid #d6d6d6;"></div>
<div class="a" style="left:107.40px;top:551.30px;width:1011.20px;height:26.70px;background:#f0f0f0;"></div>
<div class="a" style="left:1133.30px;top:551.30px;width:20.40px;height:271.00px;background:#f0f0f0;"></div>
<div class="a" style="left:107.40px;top:770.80px;width:1011.20px;height:27.20px;background:#cdeefb;"></div>
<div class="a" style="left:107.40px;top:577.50px;width:1011.40px;height:1.00px;background:#dadada;"></div>
<div class="a" style="left:107.40px;top:605.00px;width:1011.40px;height:1.00px;background:#dadada;"></div>
<div class="a" style="left:107.40px;top:632.50px;width:1011.40px;height:1.00px;background:#dadada;"></div>
<div class="a" style="left:107.40px;top:660.00px;width:1011.40px;height:1.00px;background:#dadada;"></div>
<div class="a" style="left:107.40px;top:687.50px;width:1011.40px;height:1.00px;background:#dadada;"></div>
<div class="a" style="left:107.40px;top:715.00px;width:1011.40px;height:1.00px;background:#dadada;"></div>
<div class="a" style="left:107.40px;top:742.50px;width:1011.40px;height:1.00px;background:#dadada;"></div>
<div class="a" style="left:107.40px;top:770.00px;width:1011.40px;height:1.00px;background:#dadada;"></div>
<div class="a" style="left:107.40px;top:797.50px;width:1011.40px;height:1.00px;background:#dadada;"></div>
<div class="a" style="left:141.00px;top:551.30px;width:1.00px;height:246.70px;background:#d6d6d6;"></div>
<div class="a" style="left:253.20px;top:551.30px;width:1.00px;height:246.70px;background:#d6d6d6;"></div>
<div class="a" style="left:376.20px;top:551.30px;width:1.00px;height:246.70px;background:#d6d6d6;"></div>
<div class="a" style="left:487.60px;top:551.30px;width:1.00px;height:246.70px;background:#d6d6d6;"></div>
<div class="a" style="left:619.90px;top:551.30px;width:1.00px;height:246.70px;background:#d6d6d6;"></div>
<div class="a" style="left:765.00px;top:551.30px;width:1.00px;height:246.70px;background:#d6d6d6;"></div>
<div class="a" style="left:901.90px;top:551.30px;width:1.00px;height:246.70px;background:#d6d6d6;"></div>
<div class="a" style="left:1047.40px;top:551.30px;width:1.00px;height:246.70px;background:#d6d6d6;"></div>
<div class="a" style="left:1118.30px;top:551.30px;width:1.00px;height:246.70px;background:#d6d6d6;"></div>
<div class="a" style="left:488.10px;top:770.50px;width:132.50px;height:27.80px;background:#b4e3f8;border:1px dotted #222;"></div>
<span class="t" style="left:149.10px;top:558.00px;font-size:15.50px;color:#0054a6;letter-spacing:-0.556px;">Doklad</span>
<span class="t" style="left:261.30px;top:558.00px;font-size:15.50px;color:#0054a6;letter-spacing:-0.713px;">Popis</span>
<span class="t" style="left:384.20px;top:558.00px;font-size:15.50px;color:#0054a6;letter-spacing:-0.373px;">Datum čerpání</span>
<span class="t" style="left:496.60px;top:558.00px;font-size:15.50px;color:#0054a6;letter-spacing:-0.758px;">Kurz zál. v měně F</span>
<span class="t" style="left:646.40px;top:558.00px;font-size:15.50px;color:#0054a6;letter-spacing:-0.220px;">Čerpáno netto M</span>
<span class="t" style="left:789.20px;top:558.00px;font-size:15.50px;color:#0054a6;letter-spacing:-0.574px;">Čerpáno DPH M</span>
<span class="t" style="left:968.30px;top:558.00px;font-size:15.50px;color:#0054a6;letter-spacing:-0.468px;">Čerpáno M</span>
<span class="t" style="left:1055.20px;top:558.00px;font-size:15.50px;color:#0054a6;letter-spacing:-0.471px;">Měna kř.</span>
<span class="t" style="left:149.40px;top:587.00px;font-size:15.50px;color:#111;-webkit-text-stroke:0.14px currentColor;letter-spacing:0.536px;">11/2021/5</span>
<span class="t" style="left:405.00px;top:587.00px;font-size:15.50px;color:#111;-webkit-text-stroke:0.14px currentColor;letter-spacing:-0.342px;">15.12.2021</span>
<span class="t" style="left:567.60px;top:587.00px;font-size:15.50px;color:#111;-webkit-text-stroke:0.14px currentColor;letter-spacing:-0.386px;">1,0000</span>
<span class="t" style="left:689.60px;top:587.00px;font-size:15.50px;color:#111;-webkit-text-stroke:0.14px currentColor;letter-spacing:0.028px;">10 000,00</span>
<span class="t" style="left:834.70px;top:587.00px;font-size:15.50px;color:#111;-webkit-text-stroke:0.14px currentColor;letter-spacing:0.132px;">2 100,00</span>
<span class="t" style="left:972.00px;top:587.00px;font-size:15.50px;color:#111;-webkit-text-stroke:0.14px currentColor;letter-spacing:0.028px;">12 100,00</span>
<span class="t" style="left:1055.10px;top:587.00px;font-size:15.50px;color:#111;-webkit-text-stroke:0.14px currentColor;letter-spacing:-0.800px;">Kč</span>
<span class="t" style="left:149.40px;top:614.00px;font-size:15.50px;color:#111;-webkit-text-stroke:0.14px currentColor;letter-spacing:0.536px;">11/2021/6</span>
<span class="t" style="left:405.00px;top:614.00px;font-size:15.50px;color:#111;-webkit-text-stroke:0.14px currentColor;letter-spacing:-0.342px;">15.12.2021</span>
<span class="t" style="left:567.60px;top:614.00px;font-size:15.50px;color:#111;-webkit-text-stroke:0.14px currentColor;letter-spacing:-0.386px;">1,0000</span>
<span class="t" style="left:689.60px;top:614.00px;font-size:15.50px;color:#111;-webkit-text-stroke:0.14px currentColor;letter-spacing:0.028px;">10 000,00</span>
<span class="t" style="left:834.70px;top:614.00px;font-size:15.50px;color:#111;-webkit-text-stroke:0.14px currentColor;letter-spacing:0.132px;">2 100,00</span>
<span class="t" style="left:972.00px;top:614.00px;font-size:15.50px;color:#111;-webkit-text-stroke:0.14px currentColor;letter-spacing:0.028px;">12 100,00</span>
<span class="t" style="left:1055.10px;top:614.00px;font-size:15.50px;color:#111;-webkit-text-stroke:0.14px currentColor;letter-spacing:-0.800px;">Kč</span>
<span class="t" style="left:149.40px;top:642.00px;font-size:15.50px;color:#111;-webkit-text-stroke:0.14px currentColor;letter-spacing:0.536px;">11/2021/7</span>
<span class="t" style="left:405.00px;top:642.00px;font-size:15.50px;color:#111;-webkit-text-stroke:0.14px currentColor;letter-spacing:-0.342px;">15.12.2021</span>
<span class="t" style="left:567.60px;top:642.00px;font-size:15.50px;color:#111;-webkit-text-stroke:0.14px currentColor;letter-spacing:-0.386px;">1,0000</span>
<span class="t" style="left:689.60px;top:642.00px;font-size:15.50px;color:#111;-webkit-text-stroke:0.14px currentColor;letter-spacing:0.028px;">10 000,00</span>
<span class="t" style="left:834.70px;top:642.00px;font-size:15.50px;color:#111;-webkit-text-stroke:0.14px currentColor;letter-spacing:0.132px;">2 100,00</span>
<span class="t" style="left:972.00px;top:642.00px;font-size:15.50px;color:#111;-webkit-text-stroke:0.14px currentColor;letter-spacing:0.028px;">12 100,00</span>
<span class="t" style="left:1055.10px;top:642.00px;font-size:15.50px;color:#111;-webkit-text-stroke:0.14px currentColor;letter-spacing:-0.800px;">Kč</span>
<span class="t" style="left:149.40px;top:669.00px;font-size:15.50px;color:#111;-webkit-text-stroke:0.14px currentColor;letter-spacing:0.536px;">11/2021/8</span>
<span class="t" style="left:405.00px;top:669.00px;font-size:15.50px;color:#111;-webkit-text-stroke:0.14px currentColor;letter-spacing:-0.342px;">15.12.2021</span>
<span class="t" style="left:567.60px;top:669.00px;font-size:15.50px;color:#111;-webkit-text-stroke:0.14px currentColor;letter-spacing:-0.386px;">1,0000</span>
<span class="t" style="left:689.60px;top:669.00px;font-size:15.50px;color:#111;-webkit-text-stroke:0.14px currentColor;letter-spacing:0.028px;">10 000,00</span>
<span class="t" style="left:834.70px;top:669.00px;font-size:15.50px;color:#111;-webkit-text-stroke:0.14px currentColor;letter-spacing:0.132px;">2 100,00</span>
<span class="t" style="left:972.00px;top:669.00px;font-size:15.50px;color:#111;-webkit-text-stroke:0.14px currentColor;letter-spacing:0.028px;">12 100,00</span>
<span class="t" style="left:1055.10px;top:669.00px;font-size:15.50px;color:#111;-webkit-text-stroke:0.14px currentColor;letter-spacing:-0.800px;">Kč</span>
<span class="t" style="left:149.40px;top:697.00px;font-size:15.50px;color:#111;-webkit-text-stroke:0.14px currentColor;letter-spacing:0.536px;">11/2021/9</span>
<span class="t" style="left:405.00px;top:697.00px;font-size:15.50px;color:#111;-webkit-text-stroke:0.14px currentColor;letter-spacing:-0.342px;">15.12.2021</span>
<span class="t" style="left:567.60px;top:697.00px;font-size:15.50px;color:#111;-webkit-text-stroke:0.14px currentColor;letter-spacing:-0.386px;">1,0000</span>
<span class="t" style="left:689.60px;top:697.00px;font-size:15.50px;color:#111;-webkit-text-stroke:0.14px currentColor;letter-spacing:0.028px;">10 000,00</span>
<span class="t" style="left:834.70px;top:697.00px;font-size:15.50px;color:#111;-webkit-text-stroke:0.14px currentColor;letter-spacing:0.132px;">2 100,00</span>
<span class="t" style="left:972.00px;top:697.00px;font-size:15.50px;color:#111;-webkit-text-stroke:0.14px currentColor;letter-spacing:0.028px;">12 100,00</span>
<span class="t" style="left:1055.10px;top:697.00px;font-size:15.50px;color:#111;-webkit-text-stroke:0.14px currentColor;letter-spacing:-0.800px;">Kč</span>
<span class="t" style="left:149.40px;top:724.00px;font-size:15.50px;color:#111;-webkit-text-stroke:0.14px currentColor;letter-spacing:0.543px;">11/2021/10</span>
<span class="t" style="left:405.00px;top:724.00px;font-size:15.50px;color:#111;-webkit-text-stroke:0.14px currentColor;letter-spacing:-0.342px;">15.12.2021</span>
<span class="t" style="left:567.60px;top:724.00px;font-size:15.50px;color:#111;-webkit-text-stroke:0.14px currentColor;letter-spacing:-0.386px;">1,0000</span>
<span class="t" style="left:689.60px;top:724.00px;font-size:15.50px;color:#111;-webkit-text-stroke:0.14px currentColor;letter-spacing:0.028px;">10 000,00</span>
<span class="t" style="left:834.70px;top:724.00px;font-size:15.50px;color:#111;-webkit-text-stroke:0.14px currentColor;letter-spacing:0.132px;">2 100,00</span>
<span class="t" style="left:972.00px;top:724.00px;font-size:15.50px;color:#111;-webkit-text-stroke:0.14px currentColor;letter-spacing:0.028px;">12 100,00</span>
<span class="t" style="left:1055.10px;top:724.00px;font-size:15.50px;color:#111;-webkit-text-stroke:0.14px currentColor;letter-spacing:-0.800px;">Kč</span>
<span class="t" style="left:149.40px;top:752.00px;font-size:15.50px;color:#111;-webkit-text-stroke:0.14px currentColor;letter-spacing:0.672px;">11/2021/11</span>
<span class="t" style="left:405.00px;top:752.00px;font-size:15.50px;color:#111;-webkit-text-stroke:0.14px currentColor;letter-spacing:-0.342px;">15.12.2021</span>
<span class="t" style="left:567.60px;top:752.00px;font-size:15.50px;color:#111;-webkit-text-stroke:0.14px currentColor;letter-spacing:-0.386px;">1,0000</span>
<span class="t" style="left:689.60px;top:752.00px;font-size:15.50px;color:#111;-webkit-text-stroke:0.14px currentColor;letter-spacing:0.028px;">12 100,00</span>
<span class="t" style="left:865.50px;top:752.00px;font-size:15.50px;color:#111;-webkit-text-stroke:0.14px currentColor;letter-spacing:0.117px;">0,00</span>
<span class="t" style="left:972.00px;top:752.00px;font-size:15.50px;color:#111;-webkit-text-stroke:0.14px currentColor;letter-spacing:0.028px;">12 100,00</span>
<span class="t" style="left:1055.10px;top:752.00px;font-size:15.50px;color:#111;-webkit-text-stroke:0.14px currentColor;letter-spacing:-0.800px;">Kč</span>
<span class="t" style="left:149.40px;top:779.00px;font-size:15.50px;color:#111;-webkit-text-stroke:0.14px currentColor;letter-spacing:0.543px;">11/2021/12</span>
<span class="t" style="left:405.00px;top:779.00px;font-size:15.50px;color:#111;-webkit-text-stroke:0.14px currentColor;letter-spacing:-0.342px;">15.12.2021</span>
<span class="t" style="left:567.60px;top:779.00px;font-size:15.50px;color:#111;-webkit-text-stroke:0.14px currentColor;letter-spacing:-0.386px;">1,0000</span>
<span class="t" style="left:689.60px;top:779.00px;font-size:15.50px;color:#111;-webkit-text-stroke:0.14px currentColor;letter-spacing:0.028px;">12 100,00</span>
<span class="t" style="left:865.50px;top:779.00px;font-size:15.50px;color:#111;-webkit-text-stroke:0.14px currentColor;letter-spacing:0.117px;">0,00</span>
<span class="t" style="left:972.00px;top:779.00px;font-size:15.50px;color:#111;-webkit-text-stroke:0.14px currentColor;letter-spacing:0.028px;">12 100,00</span>
<span class="t" style="left:1055.10px;top:779.00px;font-size:15.50px;color:#111;-webkit-text-stroke:0.14px currentColor;letter-spacing:-0.800px;">Kč</span>
<svg class="a" style="left:1138.20px;top:558.20px;" width="10.00" height="8.00" viewBox="0 0 10 8"><path d="M0.9 6.2L5 2L9.1 6.2" stroke="#505050" stroke-width="2" fill="none"/></svg>
<svg class="a" style="left:1138.20px;top:808.60px;" width="10.00" height="8.00" viewBox="0 0 10 8"><path d="M0.9 1.4L5 5.6L9.1 1.4" stroke="#505050" stroke-width="2" fill="none"/></svg>
<div class="a" style="left:1133.80px;top:780.20px;width:18.50px;height:20.60px;background:#cdcdcd;"></div>
<div class="a" style="left:106.40px;top:823.00px;width:1048.30px;height:33.00px;background:#f0f0f0;border:1px solid #d9d9d9;"></div>
<div class="a" style="left:107.40px;top:826.80px;width:1.00px;height:25.20px;background:#cfcfcf;"></div>
<div class="a" style="left:160.90px;top:826.80px;width:1.00px;height:25.20px;background:#cfcfcf;"></div>
<div class="a" style="left:300.90px;top:826.80px;width:1.00px;height:25.20px;background:#cfcfcf;"></div>
<div class="a" style="left:1058.50px;top:826.80px;width:1.00px;height:25.20px;background:#cfcfcf;"></div>
<div class="a" style="left:1091.10px;top:826.80px;width:1.00px;height:25.20px;background:#cfcfcf;"></div>
<svg class="a" style="left:115.00px;top:829.90px;" width="19.00" height="19.00" viewBox="0 0 19 19"><path d="M1.32 6.28L2.62 4.02L8.20 7.25L8.20 0.80L10.80 0.80L10.80 7.25L16.38 4.02L17.68 6.28L12.10 9.50L17.68 12.72L16.38 14.98L10.80 11.75L10.80 18.20L8.20 18.20L8.20 11.75L2.62 14.98L1.32 12.72L6.90 9.50Z" stroke="#2e6db5" stroke-width="1.5" fill="none" stroke-linejoin="miter"/></svg>
<span class="t" style="left:145.00px;top:832.00px;font-size:15.50px;color:#0054a6;">0</span>
<span class="t" style="left:170.20px;top:832.00px;font-size:15.50px;color:#0054a6;letter-spacing:-0.668px;">Počet záznamů: 12</span>
<svg class="a" style="left:1067.30px;top:831.00px;" width="16.00" height="16.40" viewBox="0 0 16 16.4"><path d="M14.9 1H1.6L8.3 8.2L1.6 15.4H14.9" stroke="#2e6db5" stroke-width="1.7" fill="none" stroke-linejoin="round"/></svg>
<div class="a" style="left:1093.80px;top:825.00px;width:28.30px;height:28.80px;background:#cdcdcd;border:2px solid #808080;"></div>
<svg class="a" style="left:1098.80px;top:830.30px;" width="18.50" height="18.50" viewBox="0 0 18.5 18.5"><path d="M1 17.3L2.4 12.2L13.3 1.3a2.1 2.1 0 0 1 3 0l0.4 0.4a2.1 2.1 0 0 1 0 3L5.8 15.6Z M2.4 12.2L5.8 15.6 M11.6 3L15 6.4" stroke="#c3c3c3" stroke-width="1.5" fill="none" stroke-linejoin="round"/><path d="M9 17.4H18" stroke="#c3c3c3" stroke-width="1.6"/></svg>
<svg class="a" style="left:1126.10px;top:828.20px;" width="24.00" height="23.00" viewBox="0 0 24 23"><g stroke="#0054a6" fill="none"><path d="M2.8 15.6H0.8V0.9H17.6V2.6" stroke-width="1.6"/><path d="M0.8 1.6H17.6" stroke-width="1.8"/><path d="M3.4 3.6H20.6V18.4H3.4Z" stroke-width="1.5"/><path d="M3.4 4.4H20.6" stroke-width="2"/><path d="M8.6 8.2H18M8.6 11H18M8.6 13.8H14" stroke-width="1.3" opacity=".8"/><path d="M5.6 8.2H7M5.6 11H7M5.6 13.8H7" stroke-width="1.3"/><circle cx="18" cy="17" r="5.4" fill="#f0f0f0" stroke-width="1.5"/><path d="M14.9 17H21.1M18 13.9V20.1" stroke-width="1.5"/></g></svg>
<div class="a" style="left:106.00px;top:864.00px;width:168.80px;height:28.20px;background:#cfcfcf;"></div>
<div class="a" style="left:282.20px;top:864.00px;width:169.10px;height:28.20px;background:#cfcfcf;"></div>
<svg class="a" style="left:113.00px;top:868.80px;" width="21.00" height="21.00" viewBox="0 0 21 21"><path d="M0.7 0.7H8L12.3 5V8M0.7 0.7V17.3H9M8 0.7V5H12.3" stroke="#b4b4b4" stroke-width="1.2" fill="none"/><path d="M9.7 8.3H19.3V20.3H9.7Z" stroke="#b4b4b4" stroke-width="1.2" fill="#d6d6d6"/><path d="M2.8 9H7M2.8 12H7M2.8 15H7M12 11.5H17M12 14.2H17M12 17H17" stroke="#b4b4b4" stroke-width="1"/></svg>
<span class="t" style="left:135.30px;top:871.00px;font-size:15.00px;color:#8c8c8c;letter-spacing:-0.188px;">Čerpání k objednáv...</span>
<svg class="a" style="left:289.00px;top:868.80px;" width="23.00" height="21.00" viewBox="0 0 23 21"><circle cx="7" cy="5.2" r="4.4" stroke="#b4b4b4" stroke-width="1.2" fill="none"/><path d="M0.7 15.5C1.5 11.8 4 10 7 10C8.6 10 10 10.5 11 11.4" stroke="#b4b4b4" stroke-width="1.2" fill="none"/><path d="M12.7 9.3H21.3V20.3H12.7Z" stroke="#b4b4b4" stroke-width="1.2" fill="#d6d6d6"/><path d="M15 12.3H19M15 15H19M15 17.6H19" stroke="#b4b4b4" stroke-width="1"/></svg>
<span class="t" style="left:314.00px;top:871.00px;font-size:15.00px;color:#8c8c8c;letter-spacing:-0.159px;">Čerpání k dodavateli</span>
<div class="a" style="left:366.30px;top:909.20px;width:260.50px;height:28.00px;background:#e1e1e1;border:1px solid #adadad;"></div>
<svg class="a" style="left:368.20px;top:913.10px;" width="24.00" height="20.00" viewBox="0 0 24 20"><path d="M0 0.9H23.8" stroke="#1a62b2" stroke-width="1.4"/><path d="M0 6.8H23.8" stroke="#3a78be" stroke-width="1.5"/><path d="M0 12.7H23.8" stroke="#6e9bcd" stroke-width="1.7"/><path d="M0 18.6H23.8" stroke="#6e9bcd" stroke-width="1.7"/></svg>
<span class="t" style="left:458.30px;top:916.00px;font-size:15.00px;color:#111;-webkit-text-stroke:0.14px currentColor;letter-spacing:-0.312px;">Vedlejší náklady</span>
<div class="a" style="left:635.20px;top:909.20px;width:260.30px;height:28.00px;background:#e1e1e1;border:1px solid #adadad;"></div>
<svg class="a" style="left:637.10px;top:913.10px;" width="24.00" height="20.00" viewBox="0 0 24 20"><path d="M0 0.9H23.8" stroke="#1a62b2" stroke-width="1.4"/><path d="M0 6.8H23.8" stroke="#3a78be" stroke-width="1.5"/><path d="M0 12.7H23.8" stroke="#6e9bcd" stroke-width="1.7"/><path d="M0 18.6H23.8" stroke="#6e9bcd" stroke-width="1.7"/></svg>
<span class="t" style="left:740.10px;top:916.00px;font-size:15.00px;color:#111;-webkit-text-stroke:0.14px currentColor;letter-spacing:-0.571px;">Sériová čísla</span>
<div class="a" style="left:904.10px;top:909.20px;width:259.50px;height:28.00px;background:#e1e1e1;border:1px solid #adadad;"></div>
<svg class="a" style="left:906.00px;top:913.10px;" width="24.00" height="20.00" viewBox="0 0 24 20"><path d="M0 0.9H23.8" stroke="#1a62b2" stroke-width="1.4"/><path d="M0 6.8H23.8" stroke="#3a78be" stroke-width="1.5"/><path d="M0 12.7H23.8" stroke="#6e9bcd" stroke-width="1.7"/><path d="M0 18.6H23.8" stroke="#6e9bcd" stroke-width="1.7"/></svg>
<span class="t" style="left:985.50px;top:916.00px;font-size:15.00px;color:#111;-webkit-text-stroke:0.14px currentColor;letter-spacing:-0.239px;">Související doklady</span>
<div class="a" style="left:1176.20px;top:43.00px;width:8.60px;height:902.80px;background:#00adef;"></div>
<div class="a" style="left:1178.50px;top:479.30px;width:4.00px;height:4.00px;background:#48ccfd;border-radius:50%;"></div>
<div class="a" style="left:1178.50px;top:490.45px;width:4.00px;height:4.00px;background:#48ccfd;border-radius:50%;"></div>
<div class="a" style="left:1178.50px;top:501.60px;width:4.00px;height:4.00px;background:#48ccfd;border-radius:50%;"></div>
<div class="a" style="left:1188.20px;top:43.00px;width:289.20px;height:902.90px;background:#0054a6;"></div>
<span class="t" style="left:1197.50px;top:61.00px;font-size:23.80px;color:#fff;letter-spacing:0.614px;">Faktura 11/2021/2</span>
<svg class="a" style="left:1450.00px;top:60.00px;" width="16.50" height="16.80" viewBox="0 0 16.5 16.8"><path d="M4.8 0.9H15.6V11.5M5.2 5.5H0.9V15.9H10.5V10.9M5.8 10.9L11.5 5.4" stroke="#fff" stroke-width="1.5" fill="none"/><path d="M7.2 4.4H12.6V9.8Z" fill="#fff"/></svg>
<div class="a" style="left:1192.20px;top:94.80px;width:259.90px;height:748.80px;background:#fcfcfc;"></div>
<div class="a" style="left:1452.10px;top:94.80px;width:21.30px;height:748.80px;background:#f0f0f0;"></div>
<svg class="a" style="left:1457.50px;top:102.40px;" width="10.00" height="8.00" viewBox="0 0 10 8"><path d="M0.9 6.2L5 2L9.1 6.2" stroke="#505050" stroke-width="2" fill="none"/></svg>
<svg class="a" style="left:1457.50px;top:829.50px;" width="10.00" height="8.00" viewBox="0 0 10 8"><path d="M0.9 1.4L5 5.6L9.1 1.4" stroke="#505050" stroke-width="2" fill="none"/></svg>
<div class="a" style="left:1454.10px;top:116.50px;width:17.80px;height:696.50px;background:#cdcdcd;"></div>
<div class="a" style="left:1192.20px;top:94.80px;width:259.90px;height:31.40px;background:#00adef;"></div>
<span class="t" style="left:1197.40px;top:105.00px;font-size:16.00px;color:#fff;font-weight:bold;letter-spacing:0.114px;">Základní údaje</span>
<div class="a" style="left:1421.00px;top:97.80px;width:1.00px;height:25.40px;background:#0a96d2;"></div>
<svg class="a" style="left:1428.20px;top:106.60px;" width="16.80" height="9.00" viewBox="0 0 16.8 9"><path d="M0.7 8.3L8.3 0.9L15.9 8.3" stroke="#fff" stroke-width="1.5" fill="none"/></svg>
<div class="a" style="left:1192.20px;top:473.80px;width:259.90px;height:7.20px;background:#0054a6;"></div>
<div class="a" style="left:1192.20px;top:481.00px;width:259.90px;height:31.50px;background:#00adef;"></div>
<span class="t" style="left:1197.40px;top:492.00px;font-size:16.00px;color:#fff;font-weight:bold;letter-spacing:0.086px;">Zálohy k objednávce</span>
<div class="a" style="left:1421.00px;top:484.00px;width:1.00px;height:25.50px;background:#0a96d2;"></div>
<svg class="a" style="left:1428.20px;top:492.80px;" width="16.80" height="9.00" viewBox="0 0 16.8 9"><path d="M0.7 8.3L8.3 0.9L15.9 8.3" stroke="#fff" stroke-width="1.5" fill="none"/></svg>
<div class="a" style="left:1192.20px;top:612.00px;width:259.90px;height:8.20px;background:#0054a6;"></div>
<div class="a" style="left:1192.20px;top:620.20px;width:259.90px;height:30.50px;background:#00adef;"></div>
<span class="t" style="left:1197.40px;top:631.00px;font-size:16.00px;color:#fff;font-weight:bold;letter-spacing:0.212px;">Zálohy k dodavateli</span>
<div class="a" style="left:1421.00px;top:623.20px;width:1.00px;height:24.50px;background:#0a96d2;"></div>
<svg class="a" style="left:1428.20px;top:632.00px;" width="16.80" height="9.00" viewBox="0 0 16.8 9"><path d="M0.7 8.3L8.3 0.9L15.9 8.3" stroke="#fff" stroke-width="1.5" fill="none"/></svg>
<div class="a" style="left:1192.20px;top:751.00px;width:259.90px;height:7.70px;background:#0054a6;"></div>
<div class="a" style="left:1192.20px;top:758.70px;width:259.90px;height:30.90px;background:#00adef;"></div>
<span class="t" style="left:1197.40px;top:769.00px;font-size:16.00px;color:#fff;font-weight:bold;letter-spacing:0.228px;">Ostatní údaje</span>
<div class="a" style="left:1421.00px;top:761.70px;width:1.00px;height:24.90px;background:#0a96d2;"></div>
<svg class="a" style="left:1428.20px;top:770.50px;" width="16.80" height="9.00" viewBox="0 0 16.8 9"><path d="M0.7 8.3L8.3 0.9L15.9 8.3" stroke="#fff" stroke-width="1.5" fill="none"/></svg>
<span class="t" style="left:1201.40px;top:137.00px;font-size:15.00px;color:#0054a6;letter-spacing:-0.233px;">Objednávka:</span>
<div class="a" style="left:1201.00px;top:152.80px;width:242.40px;height:1.00px;background:#e9e9e9;"></div>
<span class="t" style="left:1201.40px;top:164.00px;font-size:15.00px;color:#0054a6;letter-spacing:-0.267px;">Dodavatel:</span>
<span class="t" style="left:1275.80px;top:164.00px;font-size:15.00px;color:#111;-webkit-text-stroke:0.14px currentColor;letter-spacing:-0.367px;">Severomoravská energe...</span>
<div class="a" style="left:1201.00px;top:180.30px;width:242.40px;height:1.00px;background:#e9e9e9;"></div>
<span class="t" style="left:1201.40px;top:192.00px;font-size:15.00px;color:#0054a6;letter-spacing:-0.480px;">Popis:</span>
<div class="a" style="left:1201.00px;top:207.80px;width:242.40px;height:1.00px;background:#e9e9e9;"></div>
<span class="t" style="left:1201.40px;top:219.00px;font-size:15.00px;color:#0054a6;letter-spacing:0.090px;">Netto:</span>
<span class="t" style="left:1426.30px;top:219.00px;font-size:15.00px;color:#0054a6;letter-spacing:-0.475px;">Kč</span>
<span class="t" style="left:1355.80px;top:219.00px;font-size:15.00px;color:#111;-webkit-text-stroke:0.14px currentColor;letter-spacing:-0.589px;">-34 200,00</span>
<div class="a" style="left:1201.00px;top:235.30px;width:242.40px;height:1.00px;background:#e9e9e9;"></div>
<span class="t" style="left:1201.40px;top:247.00px;font-size:15.00px;color:#0054a6;letter-spacing:-0.800px;">DPH:</span>
<span class="t" style="left:1426.30px;top:247.00px;font-size:15.00px;color:#0054a6;letter-spacing:-0.475px;">Kč</span>
<span class="t" style="left:1363.90px;top:247.00px;font-size:15.00px;color:#111;-webkit-text-stroke:0.14px currentColor;letter-spacing:-0.634px;">-2 100,00</span>
<div class="a" style="left:1201.00px;top:262.80px;width:242.40px;height:1.00px;background:#e9e9e9;"></div>
<span class="t" style="left:1201.40px;top:274.00px;font-size:15.00px;color:#0054a6;font-weight:bold;letter-spacing:0.092px;">Brutto:</span>
<span class="t" style="left:1424.90px;top:274.00px;font-size:15.00px;color:#0054a6;font-weight:bold;letter-spacing:-0.800px;">Kč</span>
<span class="t" style="left:1346.10px;top:274.00px;font-size:15.00px;color:#111;font-weight:bold;letter-spacing:0.489px;">-36 300,00</span>
<div class="a" style="left:1201.00px;top:290.30px;width:242.40px;height:1.00px;background:#e9e9e9;"></div>
<span class="t" style="left:1201.40px;top:302.00px;font-size:15.00px;color:#0054a6;letter-spacing:0.024px;">Datum účetního případu:</span>
<span class="t" style="left:1375.42px;top:302.00px;font-size:15.00px;color:#111;-webkit-text-stroke:0.14px currentColor;letter-spacing:-0.800px;">15.12.2021</span>
<div class="a" style="left:1201.00px;top:317.80px;width:242.40px;height:1.00px;background:#e9e9e9;"></div>
<span class="t" style="left:1201.40px;top:329.00px;font-size:15.00px;color:#0054a6;letter-spacing:-0.356px;">Datum UZP:</span>
<span class="t" style="left:1375.42px;top:329.00px;font-size:15.00px;color:#111;-webkit-text-stroke:0.14px currentColor;letter-spacing:-0.800px;">15.12.2021</span>
<div class="a" style="left:1201.00px;top:345.30px;width:242.40px;height:1.00px;background:#e9e9e9;"></div>
<span class="t" style="left:1201.40px;top:357.00px;font-size:15.00px;color:#0054a6;letter-spacing:-0.017px;">Datum splatnosti:</span>
<span class="t" style="left:1375.42px;top:357.00px;font-size:15.00px;color:#111;-webkit-text-stroke:0.14px currentColor;letter-spacing:-0.800px;">29.12.2021</span>
<div class="a" style="left:1201.00px;top:372.80px;width:242.40px;height:1.00px;background:#e9e9e9;"></div>
<span class="t" style="left:1201.40px;top:384.00px;font-size:15.00px;color:#0054a6;letter-spacing:-0.233px;">Datum zaplacení:</span>
<span class="t" style="left:1390.40px;top:384.00px;font-size:15.00px;color:#111;-webkit-text-stroke:0.14px currentColor;letter-spacing:-0.789px;">0.0.0000</span>
<div class="a" style="left:1201.00px;top:400.30px;width:242.40px;height:1.00px;background:#e9e9e9;"></div>
<span class="t" style="left:1201.40px;top:412.00px;font-size:15.00px;color:#0054a6;letter-spacing:-0.163px;">Zbývá zaplatit:</span>
<span class="t" style="left:1426.30px;top:412.00px;font-size:15.00px;color:#0054a6;letter-spacing:-0.475px;">Kč</span>
<span class="t" style="left:1355.80px;top:412.00px;font-size:15.00px;color:#111;-webkit-text-stroke:0.14px currentColor;letter-spacing:-0.589px;">-36 300,00</span>
<div class="a" style="left:1201.00px;top:427.80px;width:242.40px;height:1.00px;background:#e9e9e9;"></div>
<div class="a" style="left:1382.20px;top:436.70px;width:28.80px;height:28.20px;background:#c8c8c8;border:1px solid #adadad;"></div>
<span class="t" style="left:1201.40px;top:523.00px;font-size:15.00px;color:#0054a6;letter-spacing:-0.371px;">Čerpáno</span>
<span class="t" style="left:1426.30px;top:523.00px;font-size:15.00px;color:#0054a6;letter-spacing:-0.475px;">Kč</span>
<span class="t" style="left:1395.20px;top:523.00px;font-size:15.00px;color:#111;-webkit-text-stroke:0.14px currentColor;letter-spacing:-0.725px;">0,00</span>
<div class="a" style="left:1201.00px;top:539.10px;width:242.40px;height:1.00px;background:#e9e9e9;"></div>
<span class="t" style="left:1201.40px;top:550.00px;font-size:15.00px;color:#0054a6;font-weight:bold;letter-spacing:-0.075px;">Dočerpat</span>
<span class="t" style="left:1424.90px;top:550.00px;font-size:15.00px;color:#0054a6;font-weight:bold;letter-spacing:-0.800px;">Kč</span>
<span class="t" style="left:1390.62px;top:550.00px;font-size:15.00px;color:#111;font-weight:bold;letter-spacing:0.800px;">0,00</span>
<div class="a" style="left:1201.00px;top:565.70px;width:242.40px;height:1.00px;background:#e9e9e9;"></div>
<span class="t" style="left:1201.40px;top:662.00px;font-size:15.00px;color:#0054a6;letter-spacing:-0.371px;">Čerpáno</span>
<span class="t" style="left:1426.30px;top:662.00px;font-size:15.00px;color:#0054a6;letter-spacing:-0.475px;">Kč</span>
<span class="t" style="left:1354.33px;top:662.00px;font-size:15.00px;color:#111;-webkit-text-stroke:0.14px currentColor;letter-spacing:-0.800px;">145 200,00</span>
<div class="a" style="left:1201.00px;top:677.70px;width:242.40px;height:1.00px;background:#e9e9e9;"></div>
<span class="t" style="left:1201.40px;top:689.00px;font-size:15.00px;color:#0054a6;font-weight:bold;letter-spacing:-0.075px;">Dočerpat</span>
<span class="t" style="left:1424.90px;top:689.00px;font-size:15.00px;color:#0054a6;font-weight:bold;letter-spacing:-0.800px;">Kč</span>
<span class="t" style="left:1352.80px;top:689.00px;font-size:15.00px;color:#111;font-weight:bold;letter-spacing:0.434px;">11 979,00</span>
<div class="a" style="left:1201.00px;top:705.20px;width:242.40px;height:1.00px;background:#e9e9e9;"></div>
<svg class="a" style="left:1204.70px;top:715.30px;" width="26.00" height="26.00" viewBox="0 0 26 26"><rect x="1" y="1" width="20.4" height="21.8" rx="1.2" stroke="#222" stroke-width="1.65" fill="#fff"/><path d="M4 6.9H13.4M4 10.6H13.4M4.2 13.9H6.6" stroke="#222" stroke-width="1.7" stroke-linecap="round"/><path d="M16.2 6.9H17.6M16.2 10.6H17.6" stroke="#222" stroke-width="1.8" stroke-linecap="round"/><ellipse cx="16.9" cy="22.3" rx="6.7" ry="3.3" fill="#ffb12f"/><rect x="10.2" y="19.6" width="13.4" height="2.8" fill="#ffc031"/><ellipse cx="16.9" cy="19.9" rx="6.7" ry="3.2" fill="#ffb12f"/><ellipse cx="16.9" cy="17.9" rx="6.7" ry="3.3" fill="#ffe83a"/></svg>
<span class="t" style="left:1201.40px;top:800.00px;font-size:15.00px;color:#0054a6;letter-spacing:0.088px;">Vytvořil:</span>
<span class="t" style="left:1298.30px;top:800.00px;font-size:15.00px;color:#111;-webkit-text-stroke:0.14px currentColor;letter-spacing:-0.800px;">K2</span>
<span class="t" style="left:1318.50px;top:800.00px;font-size:15.00px;color:#0054a6;letter-spacing:-0.728px;">02.11.2021 13:34:01</span>
<div class="a" style="left:1201.00px;top:816.60px;width:242.40px;height:1.00px;background:#e9e9e9;"></div>
<span class="t" style="left:1201.40px;top:828.00px;font-size:15.00px;color:#0054a6;letter-spacing:0.117px;">Změnil:</span>
<span class="t" style="left:1298.30px;top:828.00px;font-size:15.00px;color:#111;-webkit-text-stroke:0.14px currentColor;letter-spacing:-0.800px;">K2</span>
<span class="t" style="left:1318.50px;top:828.00px;font-size:15.00px;color:#0054a6;letter-spacing:-0.728px;">02.11.2021 14:08:26</span>
<div class="a" style="left:1192.20px;top:847.70px;width:281.30px;height:94.80px;background:#fcfcfc;"></div>
<div class="a" style="left:1192.20px;top:847.70px;width:281.30px;height:30.90px;background:#00adef;"></div>
<span class="t" style="left:1197.40px;top:858.00px;font-size:16.00px;color:#fff;font-weight:bold;letter-spacing:-0.013px;">Nastavení</span>
<div class="a" style="left:1442.40px;top:850.70px;width:1.00px;height:24.90px;background:#0a96d2;"></div>
<svg class="a" style="left:1449.60px;top:859.50px;" width="16.80" height="9.00" viewBox="0 0 16.8 9"><path d="M0.7 8.3L8.3 0.9L15.9 8.3" stroke="#fff" stroke-width="1.5" fill="none"/></svg>
<span class="t" style="left:1210.60px;top:889.00px;font-size:15.00px;color:#0054a6;letter-spacing:0.040px;">Období</span>
<span class="t" style="left:1346.70px;top:889.00px;font-size:15.00px;color:#0054a6;letter-spacing:-0.800px;">Sklad</span>
<div class="a" style="left:1201.00px;top:905.10px;width:128.80px;height:28.70px;background:#fffee1;border:1px solid #1aaef0;box-shadow:inset 0 0 0 1px rgba(26,174,240,.28);"></div>
<div class="a" style="left:1337.30px;top:905.10px;width:127.50px;height:28.70px;background:#fffee1;border:1px solid #1aaef0;box-shadow:inset 0 0 0 1px rgba(26,174,240,.28);"></div>
<span class="t" style="left:1205.10px;top:914.00px;font-size:15.50px;color:#111;-webkit-text-stroke:0.14px currentColor;letter-spacing:-0.529px;">2021</span>
<svg class="a" style="left:1308.30px;top:913.60px;" width="15.00" height="12.50" viewBox="0 0 15 12.5"><path d="M0.6 0.6H3.8V3.4H0.6ZM5.6 0.6H8.8V3.4H5.6ZM10.6 0.6H13.8V3.4H10.6Z" stroke="#245fa9" stroke-width="1.25" fill="#dfe9f5"/><path d="M0.9 5.8L7.2 11.2L13.5 5.8" stroke="#2e6db5" stroke-width="1.4" fill="none"/></svg>
<svg class="a" style="left:1443.00px;top:913.60px;" width="15.00" height="12.50" viewBox="0 0 15 12.5"><path d="M0.6 0.6H3.8V3.4H0.6ZM5.6 0.6H8.8V3.4H5.6ZM10.6 0.6H13.8V3.4H10.6Z" stroke="#245fa9" stroke-width="1.25" fill="#dfe9f5"/><path d="M0.9 5.8L7.2 11.2L13.5 5.8" stroke="#2e6db5" stroke-width="1.4" fill="none"/></svg>
</body></html>
